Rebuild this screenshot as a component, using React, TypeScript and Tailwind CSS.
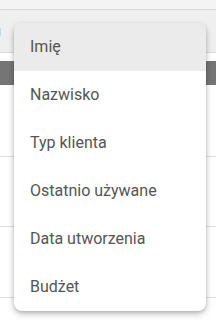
import React from "react";

const items = ["Imię", "Nazwisko", "Typ klienta", "Ostatnio używane", "Data utworzenia", "Budżet"];

export default function App() {
  return (
    <div
      className="relative w-[216px] h-[323px] overflow-hidden bg-white"
      style={{ fontFamily: "Roboto, 'Noto Sans', sans-serif" }}
    >
      <div className="h-[10px] bg-[#f4f4f4] border-b border-[#dadada]" />
      <div className="h-[43px] bg-[#efefef] border-b border-[#dadada] flex items-center justify-between overflow-hidden">
        <span className="ml-[-54px] text-[13px] text-[#2a4aa0] whitespace-nowrap">Sortuj wg</span>
        <span className="mr-[-66px] text-[13px] text-[#2a4aa0] whitespace-nowrap">Filtrowanie</span>
      </div>
      <div className="h-[8px]" />
      <div className="h-[24px] bg-[#757575]" />
      <div className="h-[72px] border-b border-[#dedede]" />
      <div className="h-[70px] border-b border-[#dedede]" />
      <div className="h-[71px] border-b border-[#dedede]" />

      <div className="absolute left-[14px] top-[23px] w-[192px] bg-white rounded-[8px] overflow-hidden shadow-[0_3px_6px_rgba(0,0,0,0.25),0_1px_3px_rgba(0,0,0,0.12)]">
        {items.map((t, i) => (
          <div
            key={t}
            className={`h-[48px] flex items-center pl-4 text-[16px] text-[#555555] ${i === 0 ? "bg-[#ebebeb]" : ""}`}
          >
            {t}
          </div>
        ))}
      </div>
    </div>
  );
}
